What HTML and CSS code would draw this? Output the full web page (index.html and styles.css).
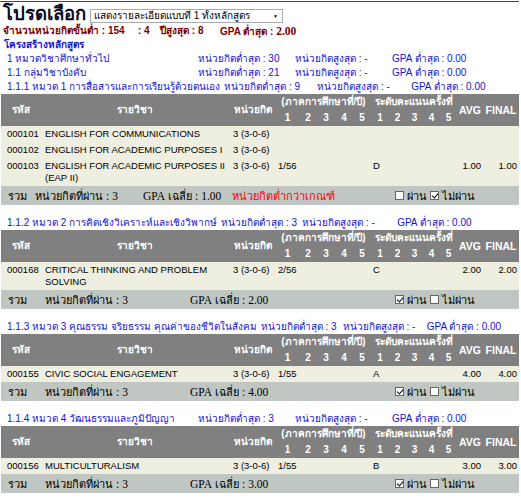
FILE: index.html
```html
<!DOCTYPE html>
<html lang="th">
<head>
<meta charset="utf-8">
<title>โปรดเลือก</title>
<link rel="stylesheet" href="styles.css">
</head>
<body>
<div class="page">
  <div class="title-row">
    <h1 class="title">โปรดเลือก</h1>
    <div class="select"><span class="select-text">แสดงรายละเอียดแบบที่ 1 ทั้งหลักสูตร</span><span class="caret">▼</span></div>
  </div>
  <div class="req"><span>จำนวนหน่วยกิตขั้นต่ำ : 154</span><span>: 4</span><span>ปีสูงสุด : 8</span><span>GPA ต่ำสุด : <span class="serif">2.00</span></span></div>
  <div class="struct">โครงสร้างหลักสูตร</div>

  <div class="grp"><span>1 หมวดวิชาศึกษาทั่วไป</span><span>หน่วยกิตต่ำสุด : 30</span><span>หน่วยกิตสูงสุด : -</span><span>GPA ต่ำสุด : 0.00</span></div>
  <div class="grp"><span>1.1 กลุ่มวิชาบังคับ</span><span>หน่วยกิตต่ำสุด : 21</span><span>หน่วยกิตสูงสุด : -</span><span>GPA ต่ำสุด : 0.00</span></div>
  <div class="grp grp-a"><span>1.1.1 หมวด 1 การสื่อสารและการเรียนรู้ด้วยตนเอง</span><span>หน่วยกิตต่ำสุด : 9</span><span>หน่วยกิตสูงสุด : -</span><span>GPA ต่ำสุด : 0.00</span></div>

  <table class="course">
    <colgroup>
      <col class="c-code"><col class="c-name"><col class="c-cr">
      <col class="c-s1"><col class="c-s"><col class="c-s"><col class="c-s"><col class="c-s">
      <col class="c-g1"><col class="c-g"><col class="c-g"><col class="c-g"><col class="c-g">
      <col class="c-avg"><col class="c-fin">
    </colgroup>
    <thead>
      <tr><th rowspan="2">รหัส</th><th rowspan="2">รายวิชา</th><th rowspan="2">หน่วยกิต</th><th colspan="5" class="span">(ภาคการศึกษาที่/ปี)</th><th colspan="5" class="span">ระดับคะแนนครั้งที่</th><th rowspan="2" class="lat">AVG</th><th rowspan="2" class="lat">FINAL</th></tr>
      <tr><th>1</th><th>2</th><th>3</th><th>4</th><th>5</th><th>1</th><th>2</th><th>3</th><th>4</th><th>5</th></tr>
    </thead>
    <tbody>
      <tr><td class="code">000101</td><td class="name">ENGLISH FOR COMMUNICATIONS</td><td class="cr">3 (3-0-6)</td><td class="s1"></td><td></td><td></td><td></td><td></td><td class="g1"></td><td></td><td></td><td></td><td></td><td class="avg"></td><td class="fin"></td></tr>
      <tr><td class="code">000102</td><td class="name">ENGLISH FOR ACADEMIC PURPOSES I</td><td class="cr">3 (3-0-6)</td><td class="s1"></td><td></td><td></td><td></td><td></td><td class="g1"></td><td></td><td></td><td></td><td></td><td class="avg"></td><td class="fin"></td></tr>
      <tr><td class="code">000103</td><td class="name">ENGLISH FOR ACADEMIC PURPOSES II (EAP II)</td><td class="cr">3 (3-0-6)</td><td class="s1">1/56</td><td></td><td></td><td></td><td></td><td class="g1">D</td><td></td><td></td><td></td><td></td><td class="avg">1.00</td><td class="fin">1.00</td></tr>
      <tr class="sum-row"><td colspan="15">
        <div class="sum sum-a"><span>รวม</span><span>หน่วยกิตที่ผ่าน <span class="serif">: 3</span></span><span><span class="serif">GPA</span> เฉลี่ย <span class="serif">: 1.00</span></span><span class="warn">หน่วยกิตต่ำกว่าเกณฑ์</span>
          <span class="checks"><span class="cb"></span><span class="lbl1">ผ่าน</span><span class="cb on"></span><span>ไม่ผ่าน</span></span></div>
      </td></tr>
    </tbody>
  </table>

  <div class="grp grp-b sec"><span>1.1.2 หมวด 2 การคิดเชิงวิเคราะห์และเชิงวิพากษ์</span><span>หน่วยกิตต่ำสุด : 3</span><span>หน่วยกิตสูงสุด : -</span><span>GPA ต่ำสุด : 0.00</span></div>
  <table class="course">
    <colgroup>
      <col class="c-code"><col class="c-name"><col class="c-cr">
      <col class="c-s1"><col class="c-s"><col class="c-s"><col class="c-s"><col class="c-s">
      <col class="c-g1"><col class="c-g"><col class="c-g"><col class="c-g"><col class="c-g">
      <col class="c-avg"><col class="c-fin">
    </colgroup>
    <thead>
      <tr><th rowspan="2">รหัส</th><th rowspan="2">รายวิชา</th><th rowspan="2">หน่วยกิต</th><th colspan="5" class="span">(ภาคการศึกษาที่/ปี)</th><th colspan="5" class="span">ระดับคะแนนครั้งที่</th><th rowspan="2" class="lat">AVG</th><th rowspan="2" class="lat">FINAL</th></tr>
      <tr><th>1</th><th>2</th><th>3</th><th>4</th><th>5</th><th>1</th><th>2</th><th>3</th><th>4</th><th>5</th></tr>
    </thead>
    <tbody>
      <tr><td class="code">000168</td><td class="name">CRITICAL THINKING AND PROBLEM SOLVING</td><td class="cr">3 (3-0-6)</td><td class="s1">2/56</td><td></td><td></td><td></td><td></td><td class="g1">C</td><td></td><td></td><td></td><td></td><td class="avg">2.00</td><td class="fin">2.00</td></tr>
      <tr class="sum-row"><td colspan="15">
        <div class="sum"><span>รวม</span><span>หน่วยกิตที่ผ่าน <span class="serif">: 3</span></span><span><span class="serif">GPA</span> เฉลี่ย <span class="serif">: 2.00</span></span>
          <span class="checks"><span class="cb on"></span><span class="lbl1">ผ่าน</span><span class="cb"></span><span>ไม่ผ่าน</span></span></div>
      </td></tr>
    </tbody>
  </table>

  <div class="grp grp-c sec"><span>1.1.3 หมวด 3 คุณธรรม จริยธรรม คุณค่าของชีวิตในสังคม</span><span>หน่วยกิตต่ำสุด : 3</span><span>หน่วยกิตสูงสุด : -</span><span>GPA ต่ำสุด : 0.00</span></div>
  <table class="course">
    <colgroup>
      <col class="c-code"><col class="c-name"><col class="c-cr">
      <col class="c-s1"><col class="c-s"><col class="c-s"><col class="c-s"><col class="c-s">
      <col class="c-g1"><col class="c-g"><col class="c-g"><col class="c-g"><col class="c-g">
      <col class="c-avg"><col class="c-fin">
    </colgroup>
    <thead>
      <tr><th rowspan="2">รหัส</th><th rowspan="2">รายวิชา</th><th rowspan="2">หน่วยกิต</th><th colspan="5" class="span">(ภาคการศึกษาที่/ปี)</th><th colspan="5" class="span">ระดับคะแนนครั้งที่</th><th rowspan="2" class="lat">AVG</th><th rowspan="2" class="lat">FINAL</th></tr>
      <tr><th>1</th><th>2</th><th>3</th><th>4</th><th>5</th><th>1</th><th>2</th><th>3</th><th>4</th><th>5</th></tr>
    </thead>
    <tbody>
      <tr><td class="code">000155</td><td class="name">CIVIC SOCIAL ENGAGEMENT</td><td class="cr">3 (3-0-6)</td><td class="s1">1/55</td><td></td><td></td><td></td><td></td><td class="g1">A</td><td></td><td></td><td></td><td></td><td class="avg">4.00</td><td class="fin">4.00</td></tr>
      <tr class="sum-row"><td colspan="15">
        <div class="sum"><span>รวม</span><span>หน่วยกิตที่ผ่าน <span class="serif">: 3</span></span><span><span class="serif">GPA</span> เฉลี่ย <span class="serif">: 4.00</span></span>
          <span class="checks"><span class="cb on"></span><span class="lbl1">ผ่าน</span><span class="cb"></span><span>ไม่ผ่าน</span></span></div>
      </td></tr>
    </tbody>
  </table>

  <div class="grp sec"><span>1.1.4 หมวด 4 วัฒนธรรมและภูมิปัญญา</span><span>หน่วยกิตต่ำสุด : 3</span><span>หน่วยกิตสูงสุด : -</span><span>GPA ต่ำสุด : 0.00</span></div>
  <table class="course">
    <colgroup>
      <col class="c-code"><col class="c-name"><col class="c-cr">
      <col class="c-s1"><col class="c-s"><col class="c-s"><col class="c-s"><col class="c-s">
      <col class="c-g1"><col class="c-g"><col class="c-g"><col class="c-g"><col class="c-g">
      <col class="c-avg"><col class="c-fin">
    </colgroup>
    <thead>
      <tr><th rowspan="2">รหัส</th><th rowspan="2">รายวิชา</th><th rowspan="2">หน่วยกิต</th><th colspan="5" class="span">(ภาคการศึกษาที่/ปี)</th><th colspan="5" class="span">ระดับคะแนนครั้งที่</th><th rowspan="2" class="lat">AVG</th><th rowspan="2" class="lat">FINAL</th></tr>
      <tr><th>1</th><th>2</th><th>3</th><th>4</th><th>5</th><th>1</th><th>2</th><th>3</th><th>4</th><th>5</th></tr>
    </thead>
    <tbody>
      <tr><td class="code">000156</td><td class="name">MULTICULTURALISM</td><td class="cr">3 (3-0-6)</td><td class="s1">1/55</td><td></td><td></td><td></td><td></td><td class="g1">B</td><td></td><td></td><td></td><td></td><td class="avg">3.00</td><td class="fin">3.00</td></tr>
      <tr class="sum-row"><td colspan="15">
        <div class="sum"><span>รวม</span><span>หน่วยกิตที่ผ่าน <span class="serif">: 3</span></span><span><span class="serif">GPA</span> เฉลี่ย <span class="serif">: 3.00</span></span>
          <span class="checks"><span class="cb on"></span><span class="lbl1">ผ่าน</span><span class="cb"></span><span>ไม่ผ่าน</span></span></div>
      </td></tr>
    </tbody>
  </table>
</div>
</body>
</html>
```

FILE: styles.css
```css
* { box-sizing: border-box; }

body {
  margin: 0;
  background: #fff;
  color: #000;
  font-family: "Liberation Sans", sans-serif;
  font-size: 10px;
}

.page {
  margin-top: 1px;
  border-top: 1px solid #e60000;
  width: 519px;
}

.title-row {
  display: flex;
  align-items: flex-start;
  height: 22px;
  padding-left: 3px;
}

.title {
  flex: none;
  width: 80px;
  margin: 0;
  font-size: 18.5px;
  line-height: 24px;
  font-weight: bold;
  color: #0a0a1e;
  white-space: nowrap;
}

.select {
  margin-left: 7px;
  margin-top: 7px;
  width: 193px;
  height: 14px;
  border: 1px solid #a5acb5;
  background: #fff;
  display: flex;
  align-items: center;
  justify-content: space-between;
  padding: 0 4px 0 3px;
  font-size: 10px;
  line-height: 12px;
  white-space: nowrap;
  overflow: hidden;
}

.caret {
  font-size: 5px;
  color: #000;
}

.req {
  display: grid;
  grid-template-columns: 135px 22px 60px auto;
  height: 14px;
  line-height: 14px;
  padding-left: 3px;
  color: #7a0000;
  font-weight: bold;
  white-space: nowrap;
}

.serif { font-family: "Liberation Serif", serif; font-size: 11.5px; }

.struct {
  height: 14px;
  line-height: 14px;
  padding-left: 4px;
  color: #1414d2;
  font-weight: bold;
}

.grp {
  display: grid;
  grid-template-columns: 191px 97px 97px 1fr;
  height: 14px;
  line-height: 14px;
  padding-left: 7px;
  color: #1414d2;
  white-space: nowrap;
}

.grp-a { grid-template-columns: max-content 93px 94px 1fr; }
.grp-b { grid-template-columns: max-content 81px 95px 1fr; }
.grp-c { grid-template-columns: max-content 82px 84px 1fr; }
.grp-a > span:first-child,
.grp-b > span:first-child,
.grp-c > span:first-child { padding-right: 4px; }

.sec { margin-top: 11px; }

.course {
  border-collapse: collapse;
  table-layout: fixed;
  width: 518px;
  margin-left: 1px;
}

.c-code { width: 40px; }
.c-name { width: 188px; }
.c-cr { width: 47px; }
.c-s1 { width: 23px; }
.c-s { width: 18px; }
.c-g1 { width: 18px; }
.c-g { width: 17px; }
.c-avg { width: 26px; }
.c-fin { width: 36px; }

.course th {
  background: #808080;
  color: #fff;
  font-weight: bold;
  height: 16px;
  line-height: 16px;
  padding: 0;
  text-align: center;
  white-space: nowrap;
  overflow: visible;
}

.course th.lat { font-size: 10.5px; }

.course td {
  background: #eeeee1;
  padding: 2px 0;
  font-size: 9.5px;
  line-height: 12px;
  vertical-align: top;
  white-space: nowrap;
}

.course td.code { padding-left: 6px; }
.course td.name { padding-left: 4px; white-space: normal; }
.course td.cr { padding-left: 4px; }
.course td.s1 { padding-left: 2px; }
.course td.g1 { padding-left: 2px; }
.course td.avg { text-align: right; padding-right: 2px; }
.course td.fin { text-align: right; padding-right: 2px; }

.course .sum-row td {
  background: #c0c7c2;
  padding: 0;
  height: 19px;
  vertical-align: middle;
}

.sum {
  display: grid;
  grid-template-columns: 37px 145px 205px 1fr;
  align-items: center;
  padding-left: 7px;
  height: 19px;
  font-size: 11px;
  white-space: nowrap;
}

.sum-a { grid-template-columns: 27px 108px 89px 163px 1fr; }

.warn { color: #f00; }

.checks {
  display: flex;
  align-items: center;
  font-size: 11px;
}

.cb {
  flex: none;
  width: 9px;
  height: 9px;
  border: 1px solid #666;
  background: #fff;
  margin-right: 3px;
  position: relative;
}

.cb.on::after {
  content: "";
  position: absolute;
  left: 2px;
  top: 0;
  width: 3px;
  height: 5px;
  border: solid #000;
  border-width: 0 1.5px 1.5px 0;
  transform: rotate(40deg);
}

.lbl1 { width: 23px; }
```
